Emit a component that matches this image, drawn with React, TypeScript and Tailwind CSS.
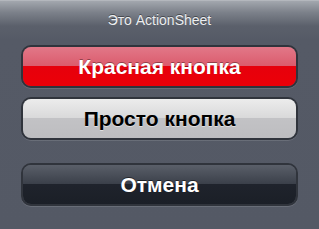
import React from 'react';

type Variant = 'red' | 'gray' | 'dark';

const faces: Record<Variant, string> = {
  red: 'bg-[linear-gradient(to_bottom,#e27888_0%,#db5c6d_48%,#e6000c_50%,#ec0008_100%)] text-white [text-shadow:0_-1px_0_rgba(0,0,0,0.35)]',
  gray: 'bg-[linear-gradient(to_bottom,#ececec_0%,#d9d9da_48%,#c2c2c5_50%,#bdbdc0_100%)] text-black [text-shadow:0_1px_0_rgba(255,255,255,0.5)]',
  dark: 'bg-[linear-gradient(to_bottom,#5a5f69_0%,#3b404a_48%,#1f232c_50%,#1b1f27_100%)] text-white [text-shadow:0_-1px_0_rgba(0,0,0,0.5)]',
};

function SheetButton({ label, variant }: { label: string; variant: Variant }) {
  return (
    <button
      type="button"
      className="h-[43px] w-full rounded-[10px] border-2 border-[#30343c] p-0 shadow-[0_1px_0_rgba(255,255,255,0.12)]"
    >
      <div
        className={`flex h-full w-full items-center justify-center rounded-[8px] text-[21px] font-bold leading-none ${faces[variant]}`}
      >
        {label}
      </div>
    </button>
  );
}

export default function App() {
  return (
    <div
      className="flex h-[229px] w-[319px] flex-col bg-[linear-gradient(to_bottom,#c4c7cc_0px,#a3a7ae_1px,#7d828b_12px,#5b606b_26px,#555a66_40px,#545965_100%)] px-[21px] pt-[12px]"
      style={{ fontFamily: '"Liberation Sans", Arial, sans-serif' }}
    >
      <div className="h-[16px] text-center text-[14px] leading-[16px] text-[#eceef0] [text-shadow:0_-1px_0_rgba(0,0,0,0.4)]">
        Это ActionSheet
      </div>
      <div className="mt-[17px] flex flex-col gap-[9px]">
        <SheetButton label="Красная кнопка" variant="red" />
        <SheetButton label="Просто кнопка" variant="gray" />
      </div>
      <div className="mt-[23px]">
        <SheetButton label="Отмена" variant="dark" />
      </div>
    </div>
  );
}
